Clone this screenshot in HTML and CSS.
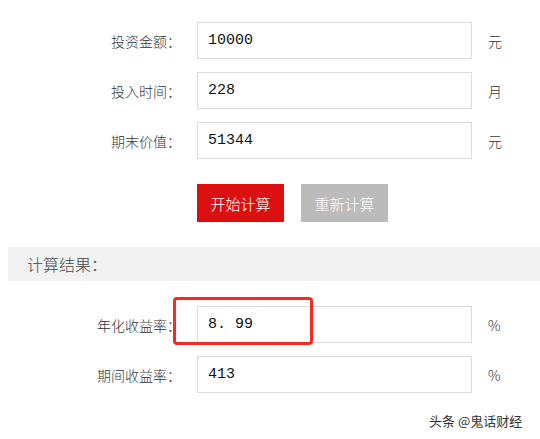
FILE: index.html
```html
<!DOCTYPE html>
<html lang="zh">
<head>
<meta charset="utf-8">
<link rel="stylesheet" href="styles.css">
</head>
<body>
<div class="page">
  <div class="form">
    <div class="row">
      <span class="label">投资金额：</span>
      <div class="field">10000</div>
      <span class="unit">元</span>
    </div>
    <div class="row">
      <span class="label">投入时间：</span>
      <div class="field">228</div>
      <span class="unit">月</span>
    </div>
    <div class="row">
      <span class="label">期末价值：</span>
      <div class="field">51344</div>
      <span class="unit">元</span>
    </div>
    <div class="buttons">
      <button class="btn btn-primary">开始计算</button>
      <button class="btn btn-reset">重新计算</button>
    </div>
  </div>
  <div class="result-head">计算结果：</div>
  <div class="form results">
    <div class="row">
      <span class="label">年化收益率：</span>
      <div class="field">8. 99</div>
      <span class="unit">%</span>
    </div>
    <div class="row">
      <span class="label">期间收益率：</span>
      <div class="field">413</div>
      <span class="unit">%</span>
    </div>
    <div class="highlight"></div>
  </div>
  <div class="watermark">头条 @鬼话财经</div>
</div>
</body>
</html>
```
FILE: styles.css
```css
html, body {
  margin: 0;
  padding: 0;
  background: #fff;
}
body {
  font-family: "Noto Sans CJK SC", "Noto Sans", sans-serif;
  font-weight: 300;
  color: #333;
  width: 540px;
  height: 439px;
  overflow: hidden;
}
.page {
  position: relative;
  height: 439px;
}
.form {
  display: flex;
  flex-direction: column;
  gap: 13px;
  padding-top: 22px;
}
.row {
  display: grid;
  grid-template-columns: 181px 275px auto;
  column-gap: 16px;
  align-items: center;
  height: 37px;
}
.label {
  text-align: right;
  font-size: 14px;
  color: #333;
  white-space: nowrap;
}
.field {
  box-sizing: border-box;
  height: 37px;
  border: 1px solid #dcdcdc;
  padding: 0 10px;
  display: flex;
  align-items: center;
  font-family: "Liberation Mono", monospace;
  font-weight: 400;
  font-size: 15px;
  color: #111;
  white-space: pre;
}
.unit {
  font-size: 14px;
  color: #333;
}
.buttons {
  display: flex;
  gap: 17px;
  padding-left: 197px;
  margin-top: 12px;
}
.btn {
  width: 87px;
  height: 38px;
  border: none;
  color: #fff;
  font-family: "Noto Sans CJK SC", sans-serif;
  font-weight: 300;
  font-size: 15px;
  padding: 0;
  cursor: pointer;
}
.btn-primary {
  background: #dc1010;
}
.btn-reset {
  background: #bbbbbb;
}
.result-head {
  margin: 25px 0 0 8px;
  height: 34px;
  background: #f2f2f2;
  display: flex;
  align-items: center;
  padding-left: 19px;
  font-size: 16px;
  color: #444;
}
.results {
  position: relative;
  padding-top: 25px;
}
.highlight {
  position: absolute;
  left: 173px;
  top: 16px;
  width: 140px;
  height: 48px;
  box-sizing: border-box;
  border: 3px solid #f52a22;
  border-radius: 4px;
}
.watermark {
  position: absolute;
  left: 429px;
  top: 411px;
  font-size: 13px;
  font-weight: 400;
  color: #333;
  text-shadow: 0 0 2px #fff;
}
```
